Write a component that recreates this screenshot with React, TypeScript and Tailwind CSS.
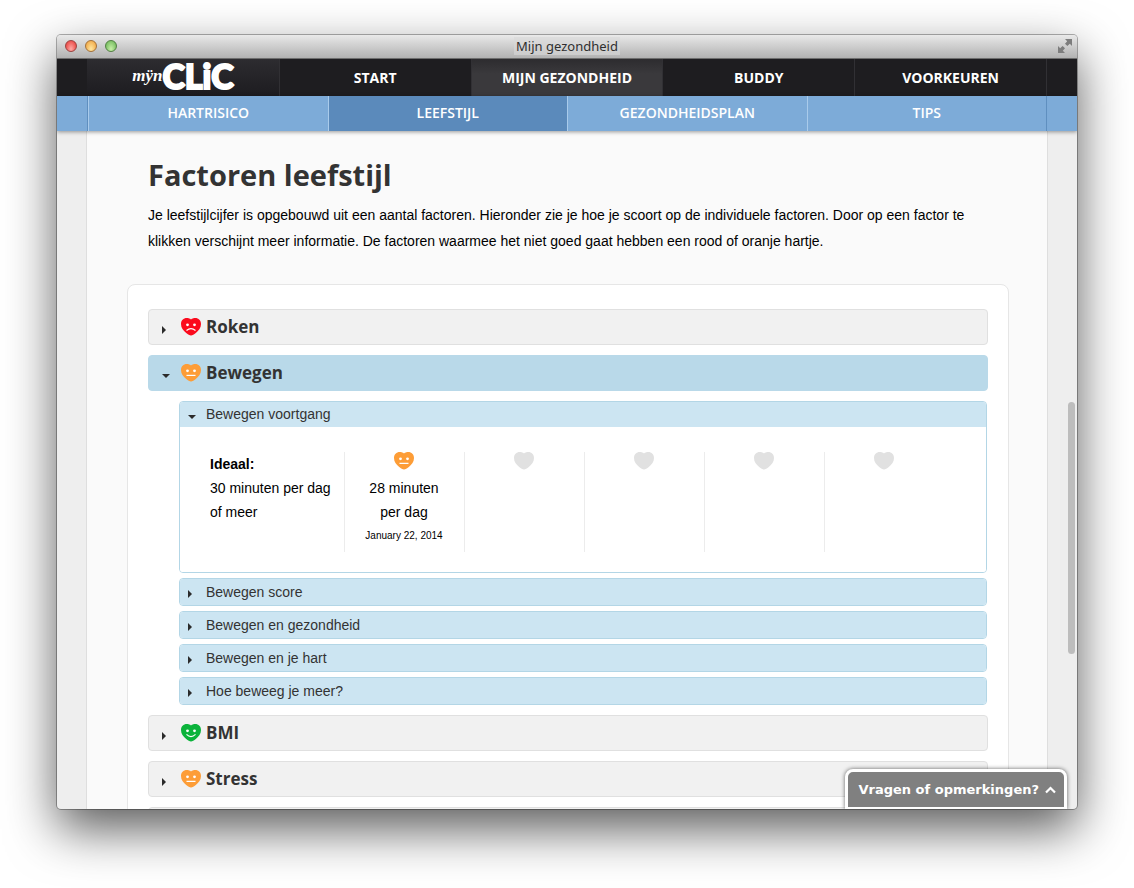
import React, { useState } from 'react';

type Mood = 'bad' | 'neutral' | 'good' | 'none';

const mainNav = ['START', 'MIJN GEZONDHEID', 'BUDDY', 'VOORKEUREN'];
const subNav = ['HARTRISICO', 'LEEFSTIJL', 'GEZONDHEIDSPLAN', 'TIPS'];

const moodColors: Record<Mood, string> = {
  bad: '#fb0a1d',
  neutral: '#fd9d37',
  good: '#0bb33b',
  none: '#e1e1e1',
};

const mouths: Record<Mood, string> = {
  bad: 'M5.5 12.4 Q10 9 14.5 12.4',
  neutral: 'M5.5 11.4 H14.5',
  good: 'M5.5 10.4 Q10 14.8 14.5 10.4',
  none: '',
};

const Heart = ({ mood }: { mood: Mood }) => (
  <svg width="20" height="18" viewBox="0 0 20 18" className="shrink-0" aria-hidden="true">
    <path
      d="M10 1.5 C11 0.5 12.6 0 14.2 0 C17.6 0 20 2.5 20 6 C20 9.8 17.8 12.6 14.8 15 C13 16.5 11.4 17.4 10 17.4 C8.6 17.4 7 16.5 5.2 15 C2.2 12.6 0 9.8 0 6 C0 2.5 2.4 0 5.8 0 C7.4 0 9 0.5 10 1.5 Z"
      fill={moodColors[mood]}
    />
    {mood !== 'none' && (
      <>
        <circle cx="6.5" cy="6.8" r="1.4" fill="white" />
        <circle cx="13.5" cy="6.8" r="1.4" fill="white" />
        <path d={mouths[mood]} fill="none" stroke="white" strokeWidth="1.2" />
      </>
    )}
  </svg>
);

const Arrow = ({ open }: { open: boolean }) => (
  <svg width="8" height="8" viewBox="0 0 8 8" className="shrink-0" aria-hidden="true">
    <path d={open ? 'M0 2 H8 L4 6 Z' : 'M0 0 V8 L4 4 Z'} fill="#2b2b2b" />
  </svg>
);

interface FactorProps {
  title: string;
  mood: Mood;
  defaultOpen?: boolean;
  children?: React.ReactNode;
}

const Factor = ({ title, mood, defaultOpen = false, children }: FactorProps) => {
  const [open, setOpen] = useState(defaultOpen);
  return (
    <section className="mb-2.5">
      <h2>
        <button
          type="button"
          aria-expanded={open}
          onClick={() => setOpen(!open)}
          className={`flex h-9 w-full items-center rounded border pl-[13px] text-left font-['Open_Sans','Noto_Sans',sans-serif] text-[17px] font-bold text-[#333] ${
            open ? 'border-[#b9d9e9] bg-[#b9d9e9]' : 'border-[#e0e0e0] bg-[#f1f1f1]'
          }`}
        >
          <span className="mt-1.5 mr-[11px] flex">
            <Arrow open={open} />
          </span>
          <Heart mood={mood} />
          <span className="ml-[5px]">{title}</span>
        </button>
      </h2>
      {open && children && <div className="mt-2.5 mr-px ml-[31px] space-y-[5px]">{children}</div>}
    </section>
  );
};

interface TopicProps {
  title: string;
  defaultOpen?: boolean;
  children?: React.ReactNode;
}

const Topic = ({ title, defaultOpen = false, children }: TopicProps) => {
  const [open, setOpen] = useState(defaultOpen);
  return (
    <section className="overflow-hidden rounded border border-[#b3d6e6]">
      <h3>
        <button
          type="button"
          aria-expanded={open}
          onClick={() => setOpen(!open)}
          className={`flex w-full items-center bg-[#cce5f2] pl-2 text-left text-[14px] text-[#333] ${
            open ? 'h-[25px]' : 'h-[26px]'
          }`}
        >
          <span className="mt-1 mr-2.5 flex">
            <Arrow open={open} />
          </span>
          {title}
        </button>
      </h3>
      {open && children}
    </section>
  );
};

const Progress = () => (
  <div className="bg-white pt-[25px] pr-10 pb-5 pl-[30px]">
    <table className="table-fixed text-center text-[14px] leading-6 text-black">
      <tbody>
        <tr className="h-[100px] align-top">
          <th scope="row" className="w-[134px] text-left font-normal">
            <strong className="block">Ideaal:</strong>
            30 minuten per dag of meer
          </th>
          <td className="w-[120px] border-l border-[#ececec] px-4">
            <div className="flex h-6 justify-center">
              <Heart mood="neutral" />
            </div>
            28 minuten per dag
            <div className="text-[10px] whitespace-nowrap">January 22, 2014</div>
          </td>
          {[0, 1, 2, 3].map((slot) => (
            <td key={slot} className="w-[120px] border-l border-[#ececec]">
              <div className="flex justify-center">
                <Heart mood="none" />
              </div>
            </td>
          ))}
        </tr>
      </tbody>
    </table>
  </div>
);

const TitleBar = () => (
  <header className="flex h-6 shrink-0 items-center border-b border-[#6d6d6d] bg-linear-to-b from-[#e9e9e9] to-[#b2b2b2] px-2 pb-px">
    <div className="flex w-20 gap-2">
      <button type="button" aria-label="Sluiten" className="size-3 rounded-full border border-[#9a4340] bg-radial-[at_50%_80%] from-[#ffaaa5] to-[#e5322f]" />
      <button type="button" aria-label="Minimaliseren" className="size-3 rounded-full border border-[#a3713a] bg-radial-[at_50%_80%] from-[#ffe7a0] to-[#ee9c34]" />
      <button type="button" aria-label="Vergroten" className="size-3 rounded-full border border-[#527f43] bg-radial-[at_50%_80%] from-[#c8f0a8] to-[#62b04e]" />
    </div>
    <h1 className="flex-1 text-center font-['Noto_Sans',sans-serif] text-[13px] leading-4 text-[#2f2f2f]">
      <span className="bg-[#d8d8d8]/60 px-0.5">Mijn gezondheid</span>
    </h1>
    <div className="flex w-20 justify-end">
      <button type="button" aria-label="Volledig scherm" className="-mr-1.5">
        <svg width="20" height="16" viewBox="0 0 20 16" fill="#7d7d7d" aria-hidden="true">
          <path d="M10 1 H17 V8 L14.8 5.8 L12.4 8 L10 5.8 L12.2 3.2 Z" />
          <path d="M3 8 L5.2 10.2 L7.6 8 L10 10.2 L7.8 12.8 L10 15 H3 Z" />
        </svg>
      </button>
    </div>
  </header>
);

const MainNav = () => (
  <nav className="h-[37px] shrink-0 bg-[#1e1d20]">
    <div className="mx-auto grid h-full max-w-[960px] grid-cols-5 border-r border-[#313034]">
      <a href="#home" className="flex items-center justify-center bg-linear-to-b from-[#2d2c30] to-[#1d1c20] pb-1 text-white">
        <span className="font-['Liberation_Serif',serif] text-[17px] font-bold italic">mÿn</span>
        <span className="font-['Lato',sans-serif] text-[34px] leading-8 font-black [-webkit-text-stroke:2px_white]">CLiC</span>
      </a>
      {mainNav.map((item) => (
        <a
          key={item}
          href="#main"
          className={`flex items-center justify-center border-l border-[#313034] font-['Open_Sans','Noto_Sans',sans-serif] text-[14px] font-bold text-white ${
            item === 'MIJN GEZONDHEID' ? 'bg-linear-to-b from-[#2d2c2f] to-[#3a393c] to-40%' : ''
          }`}
        >
          {item}
        </a>
      ))}
    </div>
  </nav>
);

const SubNav = () => (
  <nav className="z-10 h-[35px] shrink-0 bg-[#7dabd8] shadow-[0_1px_4px_rgba(0,0,0,0.4)]">
    <div className="mx-auto grid h-full max-w-[960px] grid-cols-4 border-x border-[#5f8fbf]">
      {subNav.map((item) => (
        <a
          key={item}
          href="#sub"
          className={`flex items-center justify-center border-l border-[#a9cbeb] pb-0.5 font-['Open_Sans','Noto_Sans',sans-serif] text-[14px] font-semibold text-white ${
            item === 'LEEFSTIJL' ? 'bg-[#5b8abb]' : ''
          }`}
        >
          {item}
        </a>
      ))}
    </div>
  </nav>
);

const App = () => {
  return (
    <div className="flex h-screen flex-col bg-white px-[57px] pt-[35px] pb-[79px] font-['Liberation_Sans',Arial,sans-serif]">
      <div className="relative flex min-h-0 flex-1 flex-col overflow-hidden rounded-[4px] bg-[#eee] shadow-[0_0_0_1px_rgba(0,0,0,0.3),0_20px_50px_rgba(0,0,0,0.65)]">
        <TitleBar />
        <MainNav />
        <SubNav />

        <div className="min-h-0 flex-1 overflow-hidden">
          <main className="mx-auto min-h-full max-w-[962px] border-x border-[#dedede] bg-[#fafafa] pt-6 pr-[38px] pl-10">
            <div className="px-[21px]">
              <h2 className="font-['Open_Sans','Noto_Sans',sans-serif] text-[29px] leading-10 font-bold text-[#333]">Factoren leefstijl</h2>
              <p className="mt-[7px] text-[14px] leading-[26px] text-black">
                Je leefstijlcijfer is opgebouwd uit een aantal factoren. Hieronder zie je hoe je scoort op de individuele factoren. Door op een factor te klikken verschijnt meer informatie. De factoren waarmee het niet goed gaat hebben een rood of oranje hartje.
              </p>
            </div>

            <div className="mt-[30px] rounded-lg border border-[#e6e6e6] bg-white px-5 pt-6">
              <Factor title="Roken" mood="bad" />
              <Factor title="Bewegen" mood="neutral" defaultOpen>
                <Topic title="Bewegen voortgang" defaultOpen>
                  <Progress />
                </Topic>
                <Topic title="Bewegen score" />
                <Topic title="Bewegen en gezondheid" />
                <Topic title="Bewegen en je hart" />
                <Topic title="Hoe beweeg je meer?" />
              </Factor>
              <Factor title="BMI" mood="good" />
              <Factor title="Stress" mood="neutral" />
              <div className="h-9 rounded border border-[#e0e0e0] bg-[#f1f1f1]" />
            </div>
          </main>
        </div>

        {/* scrollbar thumb */}
        <div className="absolute top-[367px] right-0.5 h-[252px] w-[7px] rounded-full bg-[#bdbdbd]" />

        <button
          type="button"
          className="absolute right-2.5 bottom-0 z-20 flex h-10 items-center gap-1.5 rounded-t-lg border-[3px] border-b-2 border-white bg-[#808080] pr-2 pl-2.5 font-['DejaVu_Sans',sans-serif] text-[13px] font-bold text-white shadow-[0_0_4px_rgba(0,0,0,0.6)]"
        >
          Vragen of opmerkingen?
          <svg width="11" height="8" viewBox="0 0 11 8" fill="none" stroke="white" strokeWidth="2.2" aria-hidden="true">
            <path d="M1 6.5 L5.5 2 L10 6.5" />
          </svg>
        </button>
      </div>
    </div>
  );
};

export default App;
